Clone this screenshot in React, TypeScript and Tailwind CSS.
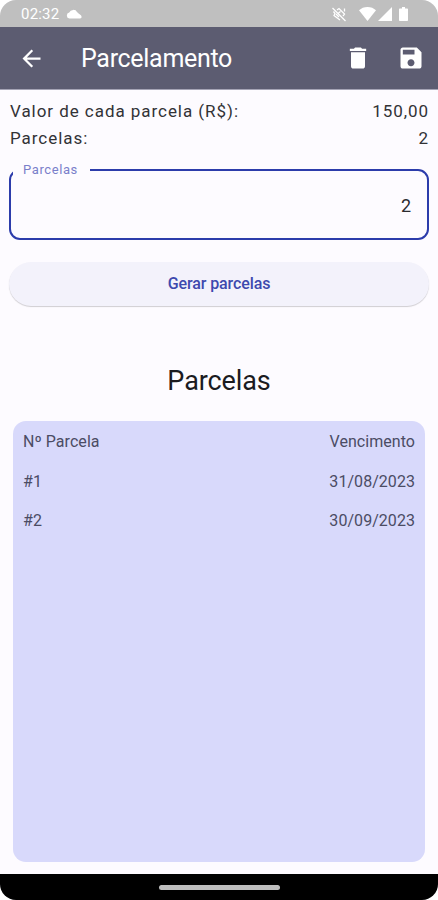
interface InstallmentRow {
  label: string;
  dueDate: string;
}

const rows: InstallmentRow[] = [
  { label: '#1', dueDate: '31/08/2023' },
  { label: '#2', dueDate: '30/09/2023' },
];

const StatusBar = () => {
  return (
    <div className="flex h-[27px] items-center justify-between bg-[#bfbfbf] pl-[21px] pr-[30px] text-white">
      <div className="flex items-center gap-[7px]">
        <span className="pt-[2px] text-[15px] leading-none tracking-[0.2px]">02:32</span>
        {/* Cloud */}
        <svg width="16" height="10" viewBox="0 0 16 10" fill="currentColor">
          <path d="M3.4 9.5A3 3 0 0 1 3.2 3.6 4.4 4.4 0 0 1 11.2 3.3C12.8 5 15.6 5.7 15.6 8.1c0 .9-.7 1.4-1.5 1.4z" />
        </svg>
      </div>

      <div className="flex items-center">
        {/* Vibration off */}
        <svg className="mr-[12px]" width="16" height="16" viewBox="0 0 16 16" fill="none" stroke="currentColor" strokeWidth="1.3">
          <path d="M1.5 2 14.5 15M2.5 5.5 4 7.5 3 9.5l6 4.500M6 4 8 2.500l5.500 5.500-1.500 2M5 8l3 3M9.500 5.500l-2 1.500M13.500 2.500v3" />
        </svg>
        {/* Wifi */}
        <svg width="17" height="14" viewBox="0 0 17 14" fill="currentColor">
          <path d="M8.5 14 0 3.3C2.2 1.2 5.2 0 8.5 0S14.8 1.2 17 3.3z" />
        </svg>
        {/* Signal */}
        <svg className="ml-[2px]" width="14" height="14" viewBox="0 0 14 14" fill="currentColor">
          <path d="M0 14 14 0v14z" />
        </svg>
        {/* Battery */}
        <svg className="ml-[7px]" width="9" height="14" viewBox="0 0 9 14" fill="currentColor">
          <path d="M3 0h3v1.5h2c.6 0 1 .4 1 1V13c0 .6-.4 1-1 1H1c-.6 0-1-.4-1-1V2.5c0-.6.4-1 1-1h2z" />
        </svg>
      </div>
    </div>
  );
};

const AppBar = () => {
  return (
    <header className="flex h-[63px] items-center border-b border-[#a5a4b5] bg-[#5c5c71] pl-[18px] pr-[13px] text-white">
      <button aria-label="Voltar">
        <svg width="27" height="27" viewBox="0 0 24 24" fill="currentColor">
          <path d="M20 11H7.83l5.59-5.59L12 4l-8 8 8 8 1.41-1.41L7.83 13H20v-2z" />
        </svg>
      </button>
      <h1 className="ml-[36px] flex-1 text-[25px] leading-none tracking-[-0.3px]">Parcelamento</h1>
      <button aria-label="Excluir">
        <svg width="28" height="28" viewBox="0 0 24 24" fill="currentColor">
          <path d="M6 19c0 1.1.9 2 2 2h8c1.1 0 2-.9 2-2V7H6v12zM19 4h-3.5l-1-1h-5l-1 1H5v2h14V4z" />
        </svg>
      </button>
      <button aria-label="Salvar" className="ml-[25px]">
        <svg width="28" height="28" viewBox="0 0 24 24" fill="currentColor">
          <path d="M17 3H5c-1.11 0-2 .9-2 2v14c0 1.1.89 2 2 2h14c1.1 0 2-.9 2-2V7l-4-4zm-5 16c-1.66 0-3-1.34-3-3s1.34-3 3-3 3 1.34 3 3-1.34 3-3 3zm3-10H5V5h10v4z" />
        </svg>
      </button>
    </header>
  );
};

const App = () => {
  return (
    <div className="h-[900px] w-[438px] bg-white font-['Roboto',sans-serif]">
      <div className="flex h-full flex-col overflow-hidden rounded-[16px] bg-[#fdfbff]">
        <StatusBar />
        <AppBar />

        <main className="flex flex-1 flex-col">
          <div className="mt-[8px] pl-[10px] pr-[9px] text-[17px] leading-[27px] tracking-[0.95px] text-[#323236]">
            <div className="flex justify-between">
              <span>Valor de cada parcela (R$):</span>
              <span>150,00</span>
            </div>
            <div className="flex justify-between">
              <span>Parcelas:</span>
              <span>2</span>
            </div>
          </div>

          {/* Outlined field, the legend cuts the top border */}
          <fieldset className="mx-[9px] mt-[10px] h-[78px] rounded-[11px] border-2 border-[#2c3cab]">
            <legend className="ml-[2px] h-[16px] w-[77px] pl-[10px] text-[13px] leading-[15px] tracking-[0.6px] text-[#7a7fca]">
              Parcelas
            </legend>
            <div className="mt-[14px] pr-[16px] text-right text-[18px] leading-[27px] text-[#2b2b2f]">2</div>
          </fieldset>

          <button className="mx-[9px] mt-[22px] h-[44px] rounded-full bg-[#f3f2fb] text-[16px] font-medium tracking-[-0.1px] text-[#3d49ae] shadow-[0_1px_1px_rgba(0,0,0,0.18)]">
            Gerar parcelas
          </button>

          <h2 className="mt-[58px] text-center text-[27px] leading-[34px] tracking-[-0.1px] text-[#1b1b1f]">Parcelas</h2>

          <section className="mx-[13px] mb-[12px] mt-[23px] flex-1 rounded-[13px] bg-[#d8d9fb] px-[10px] text-[16px] tracking-[0.05px] text-[#4b4c64]">
            <div className="flex h-[41px] items-center justify-between">
              <span>Nº Parcela</span>
              <span>Vencimento</span>
            </div>
            {rows.map((row) => (
              <div key={row.label} className="flex h-[39px] items-center justify-between">
                <span>{row.label}</span>
                <span>{row.dueDate}</span>
              </div>
            ))}
          </section>
        </main>

        <footer className="flex h-[26px] items-center justify-center bg-black">
          <div className="h-[5px] w-[121px] rounded-full bg-[#bdbdbd]" />
        </footer>
      </div>
    </div>
  );
};

export default App;
